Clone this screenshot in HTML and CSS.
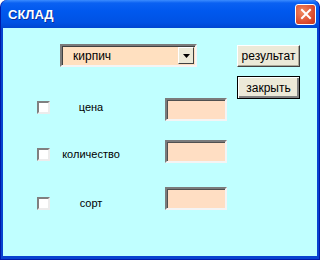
FILE: index.html
```html
<!DOCTYPE html>
<html>
  <head>
    <meta charset="utf-8" />
    <title>СКЛАД</title>
    <link rel="stylesheet" href="styles.css">
  </head>
  <body>
    <div class="window">
      <div class="titlebar">
        <span class="title">СКЛАД</span>
        <span class="close">
          <svg width="12" height="12" viewBox="0 0 12 12">
            <path d="M2 2 L10 10 M10 2 L2 10" stroke="#fff" stroke-width="2" stroke-linecap="square" />
          </svg>
        </span>
      </div>
      <div class="form">
        <div class="left">
          <div class="combo">
            <span class="combo-text">кирпич</span>
            <span class="combo-btn">
              <svg width="7" height="4" viewBox="0 0 7 4"><path d="M0 0 H7 L3.5 4 Z" fill="#000" /></svg>
            </span>
          </div>

          <div class="row row-price">
            <span class="check"></span>
            <span class="label">цена</span>
            <span class="field"></span>
          </div>
          <div class="row row-qty">
            <span class="check"></span>
            <span class="label">количество</span>
            <span class="field"></span>
          </div>
          <div class="row row-sort">
            <span class="check"></span>
            <span class="label">сорт</span>
            <span class="field"></span>
          </div>
        </div>

        <div class="buttons">
          <div class="btn">результат</div>
          <div class="btn btn-default">закрыть</div>
        </div>
      </div>
    </div>
  </body>
</html>
```

FILE: styles.css
```css
html,
body {
  margin: 0;
  padding: 0;
  background: #ffffff;
}

.window {
  width: 320px;
  height: 260px;
  box-sizing: border-box;
  display: flex;
  flex-direction: column;
  background: #0842d0;
  border-radius: 7px 7px 0 0;
  border: 1px solid #0019a8;
  border-top: 0;
}

.titlebar {
  height: 28px;
  flex: none;
  display: flex;
  align-items: center;
  justify-content: space-between;
  padding: 0 3px 0 7px;
  border-radius: 7px 7px 0 0;
  background: linear-gradient(#3b8cff 0, #0a61f2 3px, #0058ee 40%, #0052e4 80%, #0046d2 100%);
}

.title {
  color: #ffffff;
  font-family: "Liberation Sans", Arial, sans-serif;
  font-weight: bold;
  font-size: 13px;
  text-shadow: 1px 1px 0 #0a2e9c;
}

.close {
  width: 19px;
  height: 19px;
  display: flex;
  align-items: center;
  justify-content: center;
  border: 1px solid #ffffff;
  border-radius: 3px;
  background: radial-gradient(circle at 35% 35%, #f08a62, #d9462a 70%, #c2381c);
}

.form {
  flex: 1;
  display: flex;
  margin: 0 2px 3px 2px;
  padding: 16px 0 0 34px;
  background: #c0ffff;
  font-family: "Liberation Sans", Arial, sans-serif;
  font-size: 11px;
  color: #000000;
}

.left {
  display: flex;
  flex-direction: column;
}

.combo {
  margin-left: 23px;
  width: 137px;
  height: 23px;
  box-sizing: border-box;
  display: flex;
  align-items: center;
  justify-content: space-between;
  background: #ffe0c0;
  border: 2px solid;
  border-color: #7b7b7b #f4f4f4 #f4f4f4 #7b7b7b;
  box-shadow: inset 1px 1px 0 #404040;
  padding: 0 1px 0 11px;
  font-size: 12px;
}

.combo-btn {
  width: 16px;
  height: 17px;
  box-sizing: border-box;
  display: flex;
  align-items: center;
  justify-content: center;
  background: #ece9d8;
  border: 1px solid;
  border-color: #ffffff #404040 #404040 #ffffff;
}

.row {
  display: grid;
  grid-template-columns: 13px 115px 62px;
  align-items: start;
}

.row-price {
  margin-top: 31px;
  --drop: 3px;
}

.row-qty {
  margin-top: 19px;
  --drop: 8px;
}

.row-sort {
  margin-top: 24px;
  --drop: 10px;
}

.check {
  width: 13px;
  height: 13px;
  box-sizing: border-box;
  margin-top: var(--drop);
  background: #ffffff;
  border: 2px solid;
  border-color: #808080 #ececec #ececec #808080;
}

.label {
  margin-top: calc(var(--drop) - 1px);
  padding-right: 33px;
  text-align: center;
  line-height: 14px;
}

.field {
  height: 23px;
  box-sizing: border-box;
  background: #ffdec3;
  border: 2px solid;
  border-color: #7b7b7b #f4f4f4 #f4f4f4 #7b7b7b;
  box-shadow: inset 1px 1px 0 #505050;
}

.buttons {
  display: flex;
  flex-direction: column;
  gap: 9px;
  margin: 1px 0 0 10px;
}

.btn {
  width: 63px;
  height: 22px;
  box-sizing: border-box;
  display: flex;
  align-items: center;
  justify-content: center;
  background: #ece9d8;
  border: 1px solid;
  border-color: #ffffff #404040 #404040 #ffffff;
  box-shadow: inset -1px -1px 0 #aca899;
  font-size: 12px;
}

.btn-default {
  height: 23px;
  border: 1px solid #000000;
  box-shadow: inset 1px 1px 0 #ffffff, inset -2px -2px 0 #808080;
}
```
